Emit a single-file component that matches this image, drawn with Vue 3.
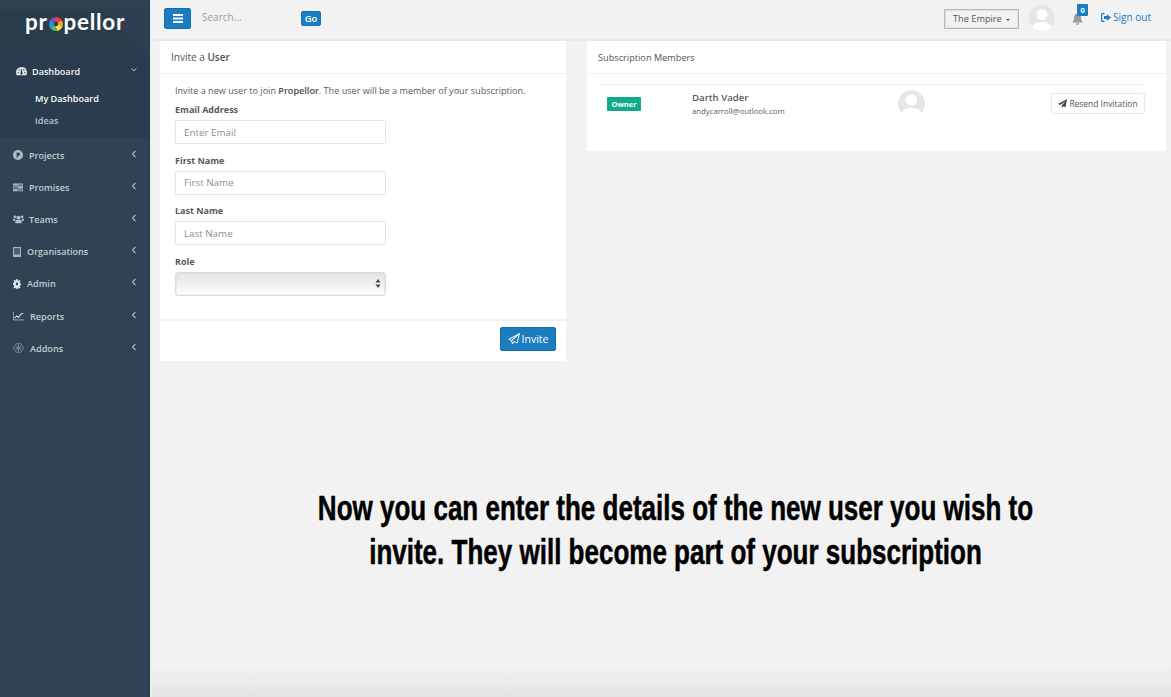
<script setup>
const navItems = [
  { label: 'Projects', icon: 'p', w: 10, gap: 6 },
  { label: 'Promises', icon: 'list', w: 10, gap: 6 },
  { label: 'Teams', icon: 'users', w: 11, gap: 5 },
  { label: 'Organisations', icon: 'tablet', w: 8, gap: 6 },
  { label: 'Admin', icon: 'cog', w: 8, gap: 6 },
  { label: 'Reports', icon: 'chart', w: 11, gap: 6 },
  { label: 'Addons', icon: 'hex', w: 11, gap: 6 },
]
const fields = [
  { label: 'Email Address', placeholder: 'Enter Email' },
  { label: 'First Name', placeholder: 'First Name' },
  { label: 'Last Name', placeholder: 'Last Name' },
]
</script>

<template>
  <div class="page">
    <aside class="sidebar">
      <div class="brand">
        <span class="logo">pr<span class="wheel"></span>pellor</span>
      </div>
      <div class="active-group">
        <div class="nav-row top">
          <svg class="nav-icon" style="width:11px" viewBox="0 0 16 14"><path fill="#e6ebf0" fill-rule="evenodd" d="M8 1a8 8 0 0 0-8 8c0 1.500.4 2.900 1.100 4h13.800A8 8 0 0 0 8 1zM3 8.500a1 1 0 1 1 0 2 1 1 0 0 1 0-2zM4.500 4.500a1 1 0 1 1 0 2 1 1 0 0 1 0-2zM11.500 4.500a1 1 0 1 1 0 2 1 1 0 0 1 0-2zM13 8.500a1 1 0 1 1 0 2 1 1 0 0 1 0-2zM8.500 4l.7 5.300a1.700 1.700 0 1 1-2.400 0L7.500 4z"/></svg>
          <span class="nav-label">Dashboard</span>
          <svg class="chev" viewBox="0 0 8 6"><path d="M1 1l3 3 3-3" fill="none" stroke="#dfe5ea" stroke-width="1.300"/></svg>
        </div>
        <div class="sub active">My Dashboard</div>
        <div class="sub">Ideas</div>
      </div>
      <nav class="nav">
        <div v-for="item in navItems" :key="item.label" class="nav-row">
          <svg class="nav-icon" :style="{ width: item.w + 'px', marginRight: item.gap + 'px' }" :viewBox="item.icon === 'tablet' ? '2 0 10 14' : '0 0 14 14'" preserveAspectRatio="none">
            <template v-if="item.icon === 'p'">
              <circle cx="7" cy="7" r="7" fill="#b2bcc6"/><path d="M5 11V3.500h2.700a2.300 2.300 0 0 1 0 4.700H6.500V11z" fill="#34485c"/>
            </template>
            <template v-else-if="item.icon === 'list'">
              <path fill="#b2bcc6" d="M0 2h14v3H0zM0 6h14v3H0zM0 10h14v3H0z"/><path fill="#34485c" d="M8 3h5v1H8zM1 7h6v1H1zM6 11h7v1H6z"/>
            </template>
            <template v-else-if="item.icon === 'users'">
              <circle cx="7" cy="5" r="2.600" fill="#b2bcc6"/><circle cx="2.500" cy="4" r="1.800" fill="#b2bcc6"/><circle cx="11.500" cy="4" r="1.800" fill="#b2bcc6"/><path fill="#b2bcc6" d="M3 13V9.500C3 8 4 8 7 8s4 0 4 1.500V13zM0 9V7.500C0 6.500 1 6.500 3 6.500L2.200 10zM14 9V7.500c0-1-1-1-3-1l.8 3.500z"/>
            </template>
            <template v-else-if="item.icon === 'tablet'">
              <path fill="#a9b4bf" d="M2 0h10v14H2z"/><path fill="#4b5d6f" d="M3.400 1.500h7.200v9H3.400z"/>
            </template>
            <template v-else-if="item.icon === 'cog'">
              <path fill="#dfe4e9" fill-rule="evenodd" d="M5.800 0h2.400l.3 2 1.200.5 1.700-1.200 1.700 1.700-1.200 1.700.5 1.200 2 .3v2.400l-2 .3-.5 1.200 1.200 1.700-1.700 1.700-1.700-1.200-1.200.5-.3 2H5.800l-.3-2-1.200-.5-1.700 1.200L.9 11.400l1.200-1.700-.5-1.200-2-.3V5.800l2-.3.5-1.200L.9 2.600 2.600.9l1.700 1.200 1.200-.5zM7 5a2 2 0 1 0 0 4 2 2 0 0 0 0-4z"/>
            </template>
            <template v-else-if="item.icon === 'chart'">
              <path fill="none" stroke="#c4ccd4" stroke-width="1" d="M.5 1v11.500H14"/><path fill="none" stroke="#dfe4e9" stroke-width="1.300" d="M2 10l3-3 2 2 3-4.500 3 -1.500"/>
            </template>
            <template v-else>
              <path fill="none" stroke="#8a98a6" stroke-width="1" d="M4 1h6l3.500 6L10 13H4L.5 7zM3 7h8M7 1v12M4 4l6 6M10 4l-6 6"/>
            </template>
          </svg>
          <span class="nav-label">{{ item.label }}</span>
          <svg class="chev" viewBox="0 0 6 8"><path d="M4.500 1l-3 3 3 3" fill="none" stroke="#aeb8c2" stroke-width="1.100"/></svg>
        </div>
      </nav>
    </aside>

    <div class="main">
      <header class="topbar">
        <button class="menu-btn" type="button">
          <svg width="10" height="9" viewBox="0 0 10 9"><path fill="#fff" d="M0 0h10v2H0zM0 3.500h10v2H0zM0 7h10v2H0z"/></svg>
        </button>
        <span class="search">Search...</span>
        <button class="go-btn" type="button">Go</button>
        <div class="spacer"></div>
        <button class="empire" type="button">The Empire <i class="caret"></i></button>
        <span class="avatar top-avatar">
          <svg viewBox="0 0 26 26"><circle cx="13" cy="9.500" r="5.500" fill="#fff"/><path d="M3 26c0-7 4-9 10-9s10 2 10 9z" fill="#fff"/></svg>
        </span>
        <span class="bell">
          <svg width="11" height="12" viewBox="0 0 11 12"><path fill="#9a9a9a" d="M5.500 0c.5 0 .8.300.8.800C8 1.200 9 2.500 9 4.500c0 3 .8 4 2 5H0c1.200-1 2-2 2-5C2 2.500 3 1.200 4.700.800c0-.5.300-.8.800-.8zM4 10.300h3c0 1-.7 1.700-1.500 1.700S4 11.300 4 10.300z"/></svg>
          <b class="badge">0</b>
        </span>
        <span class="signout">
          <svg width="10" height="9" viewBox="0 0 10 9"><path fill="#1b7dc0" d="M3.500 0v1.200H1.500c-.2 0-.3.100-.3.300v6c0 .2.100.3.300.3h2V9h-2C.6 9 0 8.400 0 7.500v-6C0 .6.600 0 1.500 0zM6 1.200l4 3.300-4 3.300V6H3V3h3z"/></svg>
          Sign out
        </span>
      </header>

      <div class="content">
        <section class="panel invite">
          <h2 class="panel-title">Invite a <strong>User</strong></h2>
          <div class="panel-body">
            <p class="intro">Invite a new user to join <strong>Propellor</strong>. The user will be a member of your subscription.</p>
            <div v-for="f in fields" :key="f.label" class="field">
              <label class="label">{{ f.label }}</label>
              <input class="input" :placeholder="f.placeholder" />
            </div>
            <div class="field">
              <label class="label">Role</label>
              <div class="select">
                <svg width="6" height="9" viewBox="0 0 6 9"><path fill="#444" d="M3 0l2.500 3.500h-5zM3 9L.5 5.500h5z"/></svg>
              </div>
            </div>
          </div>
          <div class="panel-foot">
            <button class="invite-btn" type="button">
              <svg width="12" height="12" viewBox="0 0 12 12"><path fill="none" stroke="#fff" stroke-width="1" d="M11.300.7L.8 6.300l2.800 1.200zM11.300.7L9.300 10 6 8.500 4.500 11 3.600 7.500z"/></svg>
              Invite
            </button>
          </div>
        </section>

        <section class="panel members">
          <h2 class="panel-title light">Subscription Members</h2>
          <div class="member">
            <div class="owner-col"><span class="owner">Owner</span></div>
            <div class="who">
              <div class="name">Darth Vader</div>
              <div class="email">andycarroll@outlook.com</div>
            </div>
            <span class="avatar member-avatar">
              <svg viewBox="0 0 26 26"><circle cx="13" cy="9.500" r="5.500" fill="#fff"/><path d="M3 26c0-7 4-9 10-9s10 2 10 9z" fill="#fff"/></svg>
            </span>
            <button class="resend" type="button">
              <svg width="9" height="9" viewBox="0 0 12 12"><path fill="#444" d="M12 0L0 6.500l3 1.500 7-5.500-5 6.300V12l2-2.500 3 1.500z"/></svg>
              Resend Invitation
            </button>
          </div>
        </section>
      </div>

      <p class="caption">Now you can enter the details of the new user you wish to<br />invite. They will become part of your subscription</p>
    </div>
  </div>
</template>

<style>
html, body { margin: 0; background: #f2f2f2; }
</style>

<style scoped>
* { box-sizing: border-box; }
.page {
  display: flex;
  width: 1171px;
  height: 697px;
  overflow: hidden;
  font-family: "Open Sans", "Liberation Sans", sans-serif;
  color: #4b4f54;
  background: #f2f2f2;
}
.sidebar {
  width: 152px;
  flex: none;
  background: #304254;
  border-right: 2px solid #eef0f2;
  box-shadow: inset -1px 0 0 #253647;
  color: #c3ccd5;
}
.brand {
  height: 55px;
  display: flex;
  justify-content: center;
  padding-top: 9px;
  background:
    linear-gradient(#30414f 0, #2e3f51 9px, transparent 12px),
    linear-gradient(225deg, #2d3f51 0, #2d3f51 28%, #2a3b4c 28.500%);
}
.logo {
  font-family: "Lato", sans-serif;
  font-weight: 700;
  font-size: 22.500px;
  line-height: 26px;
  letter-spacing: 0.7px;
  color: #fff;
  display: inline-flex;
  align-items: center;
  height: 26px;
}
.wheel {
  width: 14px;
  height: 14px;
  margin: 3px 1px 0;
  border-radius: 50%;
  background:
    radial-gradient(circle, #2b3c4e 0 2px, transparent 2.500px),
    conic-gradient(#e8432e 0 16%, #f5a623 16% 32%, #f3e23a 32% 48%, #5cb85c 48% 64%, #1b9ad6 64% 82%, #9a3fb5 82%);
}
.active-group {
  height: 83px;
  background: #2b3c4e;
  box-shadow: inset -1px 0 0 #253647;
}
.nav { padding-top: 1px; }
.nav-row {
  display: flex;
  align-items: center;
  height: 32.200px;
  padding: 0 13px 0 13px;
  font-size: 9.100px;
  font-weight: 600;
}
.nav-row.top {
  height: 32px;
  padding-left: 16px;
  color: #f0f3f5;
}
.nav-icon {
  flex: none;
  height: 10px;
  margin-right: 5px;
}
.nav-label { flex: 1; white-space: nowrap; }
.chev { width: 6px; height: 8px; flex: none; margin-top: -3px; }
.sub {
  padding-left: 35px;
  height: 22px;
  line-height: 22px;
  font-size: 9.100px;
  font-weight: 600;
  color: #b8c3cd;
}
.sub.active { color: #fff; margin-top: 1px; }
.main {
  flex: 1;
  display: flex;
  flex-direction: column;
  min-width: 0;
  background: linear-gradient(#f2f2f2 0, #f2f2f2 665px, #e4e4e4 697px);
}
.topbar {
  height: 41px;
  flex: none;
  display: flex;
  align-items: center;
  padding: 0 20px 5px 12px;
  border-bottom: 2px solid #e7eaed;
}
.menu-btn {
  width: 27px;
  height: 21px;
  border: 1px solid #1670ad;
  border-radius: 2px;
  background: #1b7dc0;
  padding: 0;
  display: flex;
  align-items: center;
  justify-content: center;
  margin-top: 3px;
}
.search {
  margin-left: 11px;
  width: 99px;
  font-size: 10px;
  color: #9b9b9b;
  margin-top: -1px;
}
.go-btn {
  width: 20px;
  height: 15px;
  border: 1px solid #1670ad;
  border-radius: 2px;
  background: #1b7dc0;
  color: #fff;
  font: 600 9.500px "Open Sans", sans-serif;
  padding: 0;
  margin-top: 3px;
}
.spacer { flex: 1; }
.empire {
  width: 75px;
  height: 20px;
  border: 1px solid #b8b8b8;
  box-shadow: inset 0 0 0 1px #e0e0e0;
  background: #f2f2f2;
  color: #555;
  font: 400 9.200px "Open Sans", sans-serif;
  padding: 0;
  margin-top: 3px;
}
.caret {
  display: inline-block;
  margin-left: 2px;
  vertical-align: 1px;
  border: 2.500px solid transparent;
  border-top-color: #555;
  border-bottom: 0;
}
.avatar {
  display: block;
  border-radius: 50%;
  overflow: hidden;
  background: #e6e6e6;
  flex: none;
}
.avatar svg { display: block; width: 100%; height: 100%; }
.top-avatar { width: 26px; height: 26px; margin: 2px 0 0 10px; }
.bell {
  position: relative;
  margin: 5px 0 0 17px;
  width: 11px;
  height: 13px;
  display: block;
}
.bell svg { display: block; }
.badge {
  position: absolute;
  left: 5px;
  top: -9px;
  width: 11px;
  height: 12px;
  border-radius: 1px;
  background: #1b7dc0;
  color: #fff;
  font-size: 7.500px;
  line-height: 12px;
  text-align: center;
}
.signout {
  margin: 0 0 0 18px;
  font-size: 10px;
  color: #1b7dc0;
  white-space: nowrap;
  display: flex;
  align-items: center;
  gap: 2px;
}
.content {
  display: flex;
  align-items: flex-start;
  padding: 0 5px 0 8px;
  gap: 21px;
}
.panel { background: #fff; }
.invite { width: 406px; height: 320px; display: flex; flex-direction: column; }
.members { flex: 1; height: 110px; }
.panel-title {
  margin: 0;
  height: 33px;
  padding: 0 11px;
  border-bottom: 1px solid #eef0f2;
  font-size: 10px;
  font-weight: 400;
  line-height: 32px;
  color: #4f5358;
}
.panel-title.light { font-size: 9.200px; line-height: 33px; }
.panel-title strong { font-weight: 600; }
.panel-body { flex: 1; padding: 9px 15px 0; }
.intro { margin: 0 0 5px; font-size: 9.100px; line-height: 15px; color: #5a5a5a; white-space: nowrap; }
.intro strong { font-weight: 600; color: #4a4a4a; }
.field { margin-bottom: 9.500px; }
.label {
  display: block;
  font-size: 9px;
  font-weight: 700;
  line-height: 14px;
  margin-bottom: 3px;
  color: #55595e;
}
.input {
  display: block;
  width: 211px;
  height: 24px;
  border: 1px solid #e4e6e8;
  border-radius: 1px;
  padding: 0 8px;
  font: 400 9.800px "Open Sans", sans-serif;
  background: #fff;
  outline: none;
}
.input::placeholder { color: #8e8e8e; opacity: 1; }
.select {
  width: 211px;
  height: 24px;
  border: 1px solid #dcdcdc;
  border-radius: 3px;
  background: linear-gradient(#e6e6e6, #f0f0f0 50%, #fff);
  box-shadow: inset 0 0 2px #ccc;
  display: flex;
  align-items: center;
  justify-content: flex-end;
  padding-right: 4px;
}
.panel-foot {
  height: 42px;
  flex: none;
  border-top: 2px solid #eff1f3;
  display: flex;
  justify-content: flex-end;
  padding: 6px 10px 0 0;
}
.invite-btn {
  width: 56px;
  height: 24px;
  border: 1px solid #1670ad;
  border-radius: 2px;
  background: #1b7dc0;
  color: #fff;
  font: 400 10.500px "Open Sans", sans-serif;
  padding: 0;
  display: flex;
  align-items: center;
  justify-content: center;
  gap: 2px;
}
.member {
  margin: 10px 21px 0 12px;
  border-top: 1px solid #eef0f2;
  display: flex;
  align-items: flex-start;
  padding-top: 5px;
}
.owner-col { width: 93px; flex: none; padding: 7px 0 0 8px; }
.owner {
  display: block;
  width: 34px;
  height: 14px;
  border-radius: 1px;
  background: #12ab8a;
  color: #fff;
  font-size: 7.500px;
  font-weight: 700;
  line-height: 14px;
  text-align: center;
}
.who { width: 206px; flex: none; }
.name { font-size: 9.650px; line-height: 16px; font-weight: 600; color: #55595e; }
.email { font-size: 7.750px; line-height: 11px; color: #5a5a5a; }
.member-avatar { width: 27px; height: 27px; }
.resend {
  margin: 3px 0 0 auto;
  width: 94px;
  height: 21px;
  border: 1px solid #e8e8e8;
  border-radius: 2px;
  background: #fff;
  color: #555;
  font: 400 8.450px "Open Sans", sans-serif;
  padding: 0;
  display: flex;
  align-items: center;
  justify-content: center;
  gap: 2px;
}
.caption {
  margin: 125px 0 0;
  font-family: "Liberation Sans", sans-serif;
  font-weight: 700;
  font-size: 35px;
  line-height: 44px;
  text-align: center;
  color: #000;
  -webkit-text-stroke: 0.5px #000;
  transform: translateX(14px) scaleX(0.743);
  white-space: nowrap;
}
</style>
